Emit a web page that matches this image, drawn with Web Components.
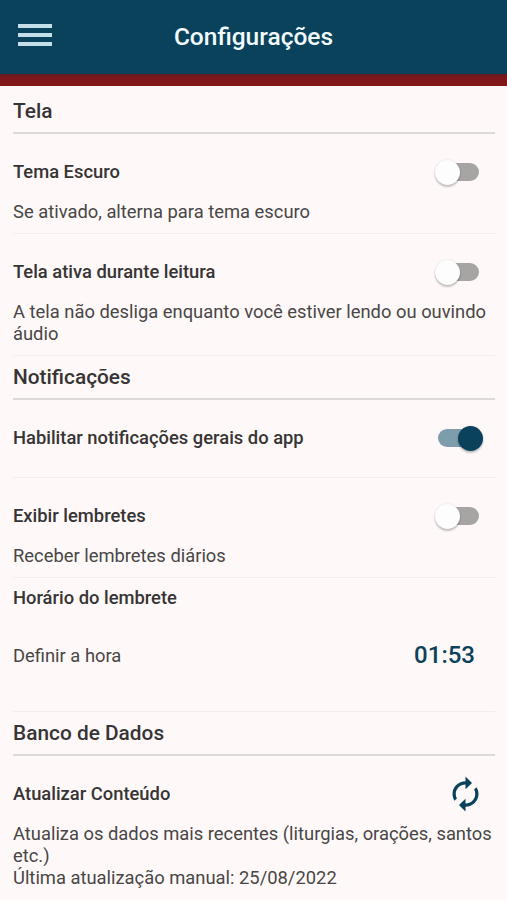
<!DOCTYPE html>
<html lang="pt-BR">
<head>
<meta charset="utf-8">
<title>Configurações</title>
<style>
body {
  margin: 0;
  background: #fef9f8;
  font-family: Roboto, "Liberation Sans", sans-serif;
  color: #363434;
}
</style>
</head>
<body>
<settings-page>
  <app-header slot="header">Configurações</app-header>

  <settings-section heading="Tela">
    <settings-item label="Tema Escuro">
      <toggle-switch slot="action"></toggle-switch>
      Se ativado, alterna para tema escuro
    </settings-item>
    <settings-item label="Tela ativa durante leitura">
      <toggle-switch slot="action"></toggle-switch>
      A tela não desliga enquanto você estiver lendo ou ouvindo áudio
    </settings-item>
  </settings-section>

  <settings-section heading="Notificações">
    <settings-item label="Habilitar notificações gerais do app">
      <toggle-switch slot="action" checked></toggle-switch>
    </settings-item>
    <settings-item label="Exibir lembretes">
      <toggle-switch slot="action"></toggle-switch>
      Receber lembretes diários
    </settings-item>
    <time-setting label="Horário do lembrete" value="01:53">Definir a hora</time-setting>
  </settings-section>

  <settings-section heading="Banco de Dados">
    <settings-item label="Atualizar Conteúdo" last>
      <refresh-button slot="action"></refresh-button>
      Atualiza os dados mais recentes (liturgias, orações, santos etc.)<br>Última atualização manual: 25/08/2022
    </settings-item>
  </settings-section>
</settings-page>

<script>
/**
 * Creates a template element from a string.
 */
function createTemplate (html) {
  const template = document.createElement('template')
  template.innerHTML = html
  return template
}

const pageTemplate = createTemplate(`
<style>
:host {
  display: block;
  height: 900px;
  overflow: hidden;
}

main {
  padding: 4px 12px 0 13px;
}
</style>
<slot name="header"></slot>
<main><slot></slot></main>
`)

customElements.define('settings-page',
  class extends HTMLElement {
    constructor () {
      super()
      this.attachShadow({ mode: 'open' })
        .appendChild(pageTemplate.content.cloneNode(true))
    }
  }
)

const headerTemplate = createTemplate(`
<style>
:host {
  display: block;
}

header {
  display: grid;
  grid-template-columns: 34px 1fr 34px;
  align-items: center;
  height: 74px;
  box-sizing: border-box;
  padding: 0 18px;
  background: #0b425b;
  color: #f2fbff;
}

svg {
  display: block;
  margin-top: -4px;
}

h1 {
  margin: 0;
  font-size: 24.5px;
  font-weight: 500;
  line-height: 28px;
  text-align: center;
}

.stripe {
  height: 12px;
  background: linear-gradient(#621a20, #7d171a 35%, #851618);
}
</style>
<header>
  <svg width="34" height="24" viewBox="0 0 34 24" fill="#c5dfea">
    <path d="M0 1h34v4H0zM0 10h34v4H0zM0 19h34v4H0z"/>
  </svg>
  <h1><slot></slot></h1>
</header>
<div class="stripe"></div>
`)

customElements.define('app-header',
  class extends HTMLElement {
    constructor () {
      super()
      this.attachShadow({ mode: 'open' })
        .appendChild(headerTemplate.content.cloneNode(true))
    }
  }
)

const sectionTemplate = createTemplate(`
<style>
:host {
  display: block;
}

h2 {
  box-sizing: border-box;
  height: 44px;
  margin: 0;
  padding-top: 8px;
  border-bottom: 2px solid #dcd9d8;
  font-size: 20.85px;
  font-weight: 500;
  line-height: 26px;
}
</style>
<h2></h2>
<slot></slot>
`)

customElements.define('settings-section',
  class extends HTMLElement {
    constructor () {
      super()
      this.attachShadow({ mode: 'open' })
        .appendChild(sectionTemplate.content.cloneNode(true))
    }

    connectedCallback () {
      this.shadowRoot.querySelector('h2').textContent = this.getAttribute('heading')
    }
  }
)

const itemTemplate = createTemplate(`
<style>
:host {
  display: block;
  padding: 9px 0 10px;
  border-bottom: 1px solid #f2eeed;
}

:host([last]) {
  border-bottom: none;
}

.head {
  display: flex;
  align-items: center;
  justify-content: space-between;
  height: 58px;
  padding-right: 12px;
}

h3 {
  margin: 0;
  font-size: 18.36px;
  font-weight: 500;
  line-height: 22px;
}

.text {
  font-size: 18.36px;
  line-height: 22px;
  color: #484646;
}
</style>
<div class="head">
  <h3></h3>
  <slot name="action"></slot>
</div>
<div class="text"><slot></slot></div>
`)

customElements.define('settings-item',
  class extends HTMLElement {
    constructor () {
      super()
      this.attachShadow({ mode: 'open' })
        .appendChild(itemTemplate.content.cloneNode(true))
    }

    connectedCallback () {
      this.shadowRoot.querySelector('h3').textContent = this.getAttribute('label')
    }
  }
)

const switchTemplate = createTemplate(`
<style>
:host {
  display: flex;
  align-items: center;
  box-sizing: border-box;
  width: 50px;
  height: 26px;
  padding: 0 4px 0 5px;
}

.track {
  display: flex;
  align-items: center;
  width: 41px;
  height: 18px;
  border-radius: 9px;
  background: #a7a4a4;
}

.knob {
  flex: none;
  width: 25px;
  height: 25px;
  margin-left: -3px;
  border-radius: 50%;
  background: #fdfdfd;
  box-shadow: 0 2px 2px rgba(0, 0, 0, 0.22), 0 0 2px rgba(0, 0, 0, 0.14);
}

:host([checked]) .track {
  background: #7d9dab;
}

:host([checked]) .knob {
  margin-left: 20px;
  background: #0b425b;
}
</style>
<div class="track"><div class="knob"></div></div>
`)

customElements.define('toggle-switch',
  class extends HTMLElement {
    constructor () {
      super()
      this.attachShadow({ mode: 'open' })
        .appendChild(switchTemplate.content.cloneNode(true))
    }

    connectedCallback () {
      this.addEventListener('click', () => this.toggleAttribute('checked'))
    }
  }
)

const timeTemplate = createTemplate(`
<style>
:host {
  display: block;
  padding: 9px 0 10px;
  border-bottom: 1px solid #f2eeed;
}

h3 {
  margin: 0;
  font-size: 18.36px;
  font-weight: 500;
  line-height: 22px;
}

.row {
  display: flex;
  align-items: center;
  justify-content: space-between;
  height: 92px;
  padding-right: 20px;
  font-size: 18.36px;
  color: #484646;
}

.value {
  font-size: 24px;
  font-weight: 500;
  color: #0b425b;
}
</style>
<h3></h3>
<div class="row">
  <slot></slot>
  <span class="value"></span>
</div>
`)

customElements.define('time-setting',
  class extends HTMLElement {
    constructor () {
      super()
      this.attachShadow({ mode: 'open' })
        .appendChild(timeTemplate.content.cloneNode(true))
    }

    connectedCallback () {
      this.shadowRoot.querySelector('h3').textContent = this.getAttribute('label')
      this.shadowRoot.querySelector('.value').textContent = this.getAttribute('value')
    }
  }
)

const refreshTemplate = createTemplate(`
<style>
:host {
  display: block;
  margin-right: -2px;
}

svg {
  display: block;
}
</style>
<svg width="39" height="38" viewBox="0 0 24 24" preserveAspectRatio="none" fill="#0b425b">
  <path d="M12 6v3l4-4-4-4v3c-4.42 0-8 3.58-8 8 0 1.57.46 3.03 1.24 4.26L6.7 14.8c-.45-.83-.7-1.79-.7-2.8 0-3.31 2.69-6 6-6zm6.76 1.74L17.3 9.2c.44.84.7 1.79.7 2.8 0 3.31-2.69 6-6 6v-3l-4 4 4 4v-3c4.42 0 8-3.58 8-8 0-1.57-.46-3.03-1.24-4.26z"/>
</svg>
`)

customElements.define('refresh-button',
  class extends HTMLElement {
    constructor () {
      super()
      this.attachShadow({ mode: 'open' })
        .appendChild(refreshTemplate.content.cloneNode(true))
    }
  }
)
</script>
</body>
</html>
